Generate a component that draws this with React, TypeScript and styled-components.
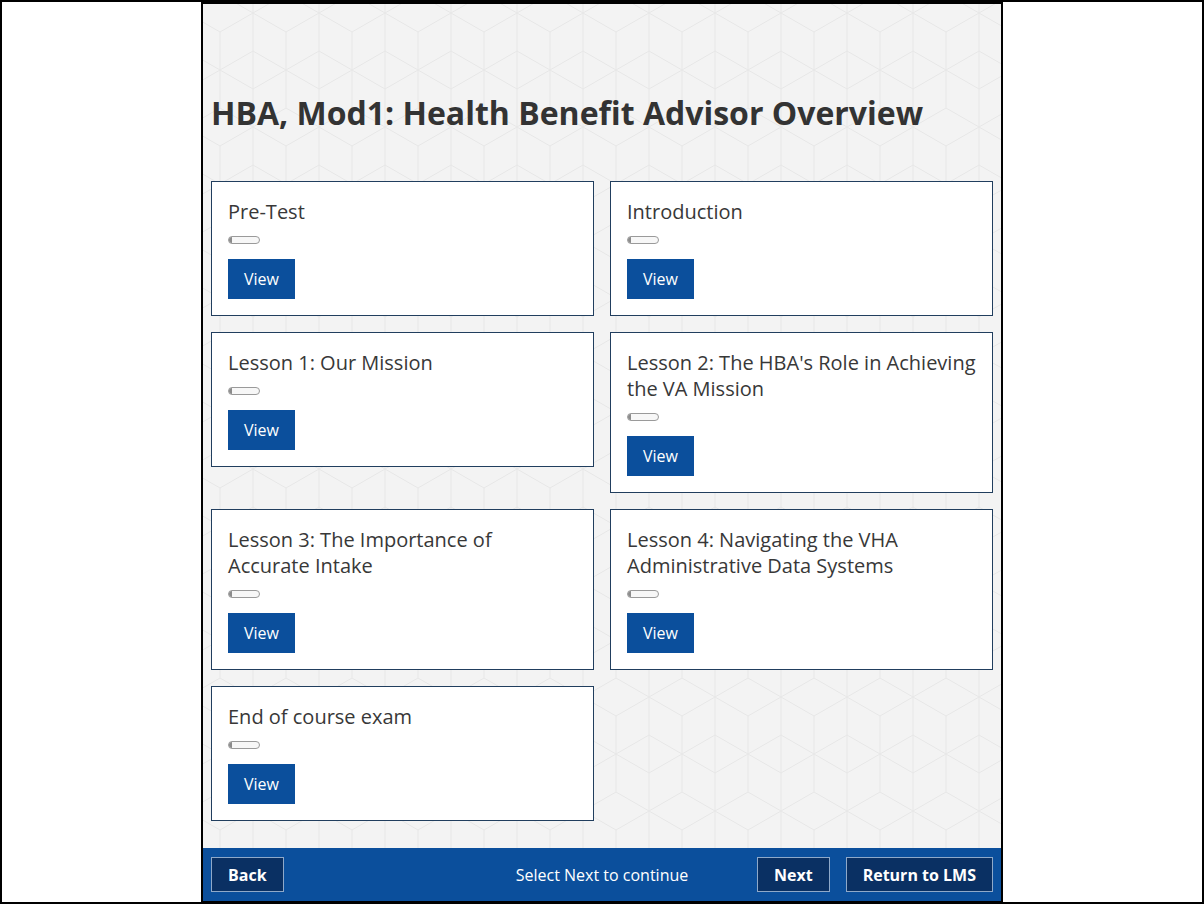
import * as React from "react";
import styled, { createGlobalStyle } from "styled-components";

const cubeTile = encodeURIComponent(
  `<svg xmlns="http://www.w3.org/2000/svg" width="66" height="114" viewBox="0 0 66 114"><g fill="none" stroke="#e7e7e7" stroke-width="1"><path d="M33 0L66 19V57L33 76L0 57V19Z"/><path d="M33 38V76M33 38L0 19M33 38L66 19"/><path d="M33 76V114M0 95L33 76M66 95L33 76M0 95V114M66 95V114M0 0V19M66 0V19M0 57V95M66 57V95"/></g></svg>`
);

const GlobalStyle = createGlobalStyle`
  html, body {
    margin: 0;
    padding: 0;
    background: #fff;
  }
  body {
    font-family: "Open Sans", "Noto Sans", sans-serif;
  }
  * {
    box-sizing: border-box;
  }
`;

const Viewport = styled.div`
  width: 1204px;
  height: 904px;
  border: 2px solid #000;
  display: flex;
  justify-content: center;
  background: #fff;
`;

const Frame = styled.div`
  width: 802px;
  height: 100%;
  border: 2px solid #000;
  border-bottom-width: 1px;
  display: flex;
  flex-direction: column;
  background-color: #f3f3f3;
  background-image: url("data:image/svg+xml,${cubeTile}");
  background-position: -16px -10px;
`;

const Content = styled.main`
  flex: 1;
  padding: 0 8px;
  overflow: hidden;
`;

const Title = styled.h1`
  margin: 89px 0 48px;
  font-size: 32px;
  line-height: 40px;
  font-weight: 700;
  color: #333;
  letter-spacing: 0;
`;

const CardGrid = styled.div`
  display: flex;
  flex-wrap: wrap;
  align-items: flex-start;
  gap: 16px;
`;

const Card = styled.section`
  width: 383px;
  background: #fff;
  border: 1px solid #213e5e;
  padding: 17px 16px 16px;
`;

const CardTitle = styled.h2`
  margin: 0;
  font-size: 20px;
  line-height: 26px;
  font-weight: 400;
  color: #383838;
`;

const Progress = styled.div<{ $value: number }>`
  position: relative;
  width: 32px;
  height: 8px;
  margin: 11px 0 15px;
  border: 1px solid #9a9a9a;
  border-radius: 4px;
  background: #f7f7f7;
  overflow: hidden;

  &::before {
    content: "";
    position: absolute;
    left: 0;
    top: 0;
    bottom: 0;
    width: ${(p) => Math.max(3, p.$value * 30)}px;
    background: #8c8c8c;
  }
`;

const ViewButton = styled.button`
  display: block;
  height: 40px;
  padding: 0 16px;
  border: 0;
  background: #0b4f9c;
  color: #fff;
  font-family: inherit;
  font-size: 16px;
  cursor: pointer;
`;

const Footer = styled.footer`
  height: 53px;
  flex-shrink: 0;
  background: #0b4f9c;
  padding: 0 8px;
  display: grid;
  grid-template-columns: 1fr auto 1fr;
  align-items: center;
`;

const FooterGroup = styled.div<{ $end?: boolean }>`
  display: flex;
  gap: 16px;
  justify-content: ${(p) => (p.$end ? "flex-end" : "flex-start")};
`;

const Status = styled.div`
  color: #fff;
  font-size: 16px;
`;

const NavButton = styled.button`
  height: 35px;
  min-width: 72px;
  padding: 0 16px;
  background: #0a3063;
  border: 1px solid #8fa9c9;
  color: #fff;
  font-family: inherit;
  font-size: 16px;
  font-weight: 700;
  cursor: pointer;
`;

const lessons = [
  "Pre-Test",
  "Introduction",
  "Lesson 1: Our Mission",
  "Lesson 2: The HBA's Role in Achieving the VA Mission",
  "Lesson 3: The Importance of Accurate Intake",
  "Lesson 4: Navigating the VHA Administrative Data Systems",
  "End of course exam",
];

export default function App() {
  return (
    <>
      <GlobalStyle />
      <Viewport>
        <Frame>
          <Content>
            <Title>HBA, Mod1: Health Benefit Advisor Overview</Title>
            <CardGrid>
              {lessons.map((name) => (
                <Card key={name}>
                  <CardTitle>{name}</CardTitle>
                  <Progress $value={0} />
                  <ViewButton>View</ViewButton>
                </Card>
              ))}
            </CardGrid>
          </Content>
          <Footer>
            <FooterGroup>
              <NavButton>Back</NavButton>
            </FooterGroup>
            <Status>Select Next to continue</Status>
            <FooterGroup $end>
              <NavButton>Next</NavButton>
              <NavButton>Return to LMS</NavButton>
            </FooterGroup>
          </Footer>
        </Frame>
      </Viewport>
    </>
  );
}
